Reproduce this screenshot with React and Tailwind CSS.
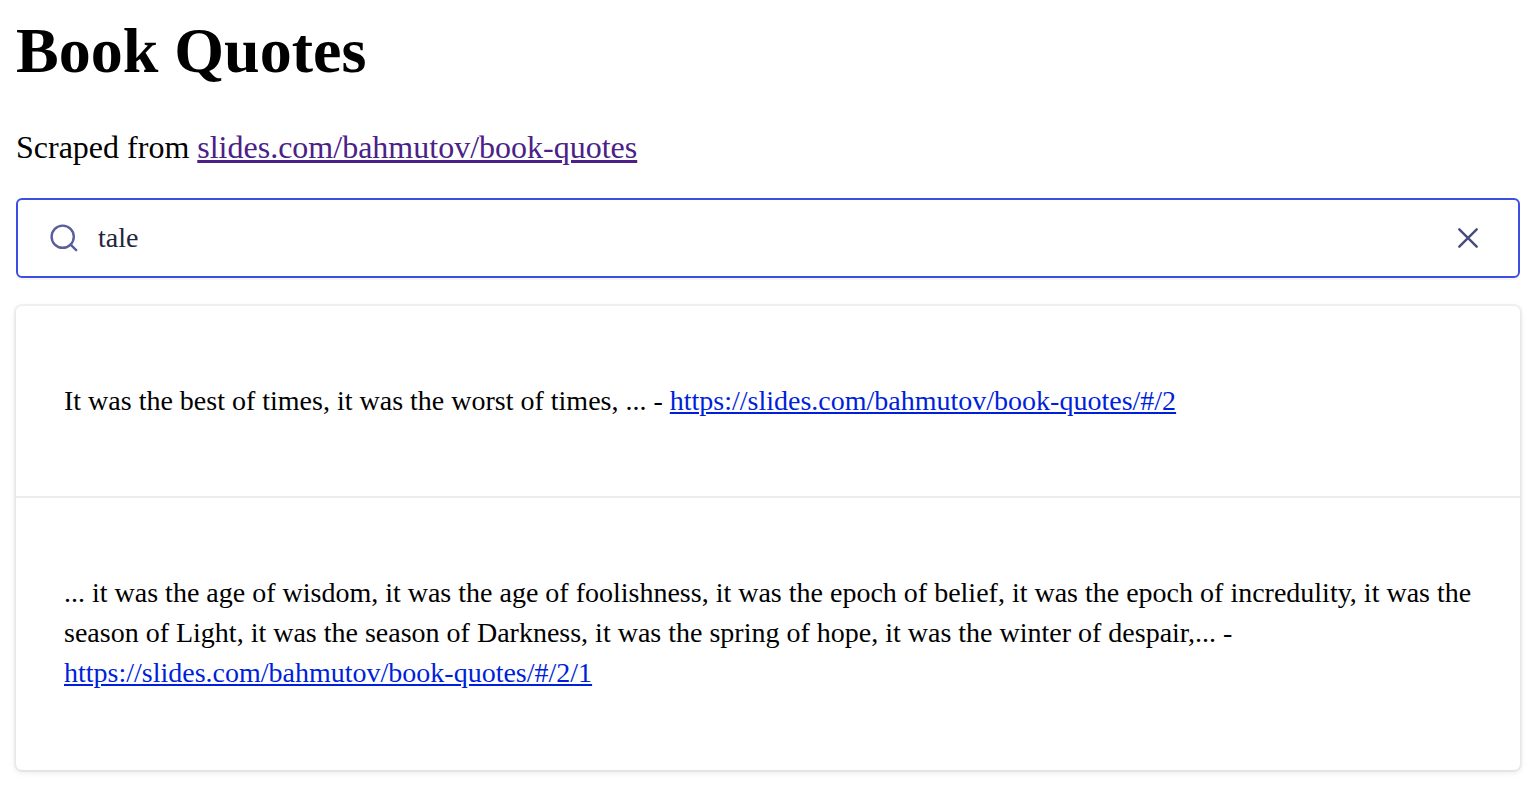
import { useState } from "react";

const quotes = [
  {
    text: "It was the best of times, it was the worst of times, ... - ",
    url: "https://slides.com/bahmutov/book-quotes/#/2",
  },
  {
    text: "... it was the age of wisdom, it was the age of foolishness, it was the epoch of belief, it was the epoch of incredulity, it was the season of Light, it was the season of Darkness, it was the spring of hope, it was the winter of despair,... - ",
    url: "https://slides.com/bahmutov/book-quotes/#/2/1",
  },
];

function SearchBox() {
  const [query, setQuery] = useState("tale");
  return (
    <form
      role="search"
      onSubmit={(e) => e.preventDefault()}
      className="mt-[31px] flex h-20 items-center rounded-[6px] border-2 border-[#3c4fe0] bg-white px-8 shadow-[0_2px_0_0_rgba(35,38,59,0.05)]"
    >
      <label htmlFor="query" aria-label="Search quotes" className="shrink-0">
        <svg className="size-7" viewBox="0 0 28 28" fill="none" stroke="#5a5e9a" strokeWidth="2.4" strokeLinecap="round">
          <circle cx="12.7" cy="12.7" r="11.1" />
          <path d="M20.6 20.6L26.2 26.2" />
        </svg>
      </label>
      <input
        id="query"
        type="text"
        value={query}
        onChange={(e) => setQuery(e.target.value)}
        className="ml-5 min-w-0 flex-1 bg-transparent text-[28px] leading-10 text-[#23263b] outline-none"
      />
      <button type="button" aria-label="Clear" onClick={() => setQuery("")} className="p-1.5">
        <svg className="size-6" viewBox="0 0 24 24" fill="none" stroke="#484c7a" strokeWidth="2.4" strokeLinecap="round">
          <path d="M3.3 3.3L20.7 20.7M20.7 3.3L3.3 20.7" />
        </svg>
      </button>
    </form>
  );
}

export default function App() {
  return (
    <main className="bg-white pt-[15px] pr-[14px] pb-4 pl-4 font-['Liberation_Serif',serif] text-black">
      <h1 className="text-[64px] leading-[72px] font-bold">Book Quotes</h1>
      <p className="mt-10 text-[32px] leading-10">
        Scraped from{" "}
        <a href="https://slides.com/bahmutov/book-quotes" className="text-[#4b2187] underline">
          slides.com/bahmutov/book-quotes
        </a>
      </p>
      <SearchBox />
      <ol className="mt-7 rounded-[6px] bg-white shadow-[0_0_0_2px_rgba(35,38,59,0.05),0_2px_6px_0_rgba(35,38,59,0.12)]">
        {quotes.map((quote) => (
          <li key={quote.url} className="px-12 pt-[75px] pb-[77px] text-[28px] leading-10 not-last:shadow-[inset_0_-2px_0_#ececee]">
            {quote.text}
            <a href={quote.url} className="text-[#001fdb] underline">
              {quote.url}
            </a>
          </li>
        ))}
      </ol>
    </main>
  );
}
